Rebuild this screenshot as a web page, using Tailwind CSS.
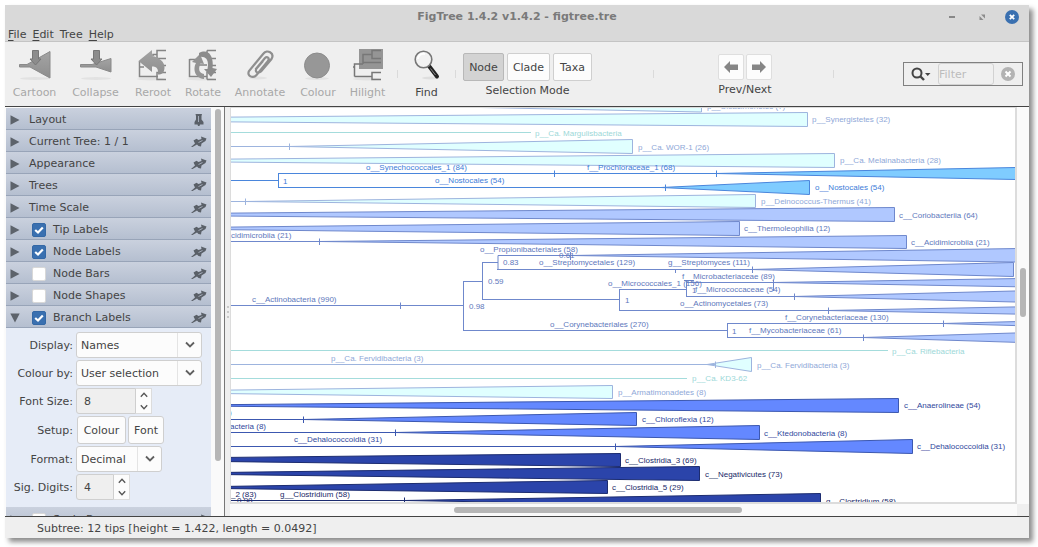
<!DOCTYPE html>
<html lang="en">
<head>
<meta charset="utf-8">
<title>FigTree 1.4.2 v1.4.2 - figtree.tre</title>
<script src="https://cdn.jsdelivr.net/npm/@tailwindcss/browser@4"></script>
</head>
<body class="h-screen overflow-hidden bg-white pt-[5px] pr-[9px] pb-[9px] pl-[5px] font-['DejaVu_Sans',sans-serif] text-[11px] leading-4 text-[#444]">

<svg width="0" height="0" class="absolute" aria-hidden="true">
  <defs>
    <linearGradient id="metal" x1="0" y1="0" x2="0" y2="1"><stop offset="0" stop-color="#a4a4a4"/><stop offset="1" stop-color="#8e8e8e"/></linearGradient>
    <symbol id="pin" viewBox="0 0 16 14"><path d="M0 12L4 8.500L2.500 5.500L5.500 3.800L7.500 5L10.500 4L10 1.500L15.500 3.500L14.500 6L10.500 8.500L10 11.500L7.500 11L6 9.500L1.500 12Z" fill="#5a6068"/><path d="M7.500 7.500L11.500 5.500" stroke="#a4acba" stroke-width="1"/></symbol>
    <symbol id="pin-up" viewBox="0 0 16 14"><path d="M4.500 1 H11 L10.500 3 V6.500 L12.500 9 V11.500 H9 L8.500 13 H7 L6.500 11.500 H3.500 V9 L5 6.500 V3 Z" fill="#5a6068"/><path d="M7.500 3V9" stroke="#a4acba" stroke-width="1"/></symbol>
    <symbol id="tri" viewBox="0 0 10 10"><path d="M.5 .3L9.500 5L.5 9.700Z" fill="#5d636b"/></symbol>
    <symbol id="check" viewBox="0 0 14 14"><path d="M3.200 7L6 9.500L10.800 4.500" fill="none" stroke="#fff" stroke-width="2.200"/></symbol>
    <symbol id="chev" viewBox="0 0 10 8"><path d="M1 1.500L5 5.500L9 1.500" fill="none" stroke="#606060" stroke-width="1.800"/></symbol>
    <symbol id="up" viewBox="0 0 8 6"><path d="M.8 4.800L4 1.300L7.200 4.800" fill="none" stroke="#555" stroke-width="1.300"/></symbol>
    <symbol id="down" viewBox="0 0 8 6"><path d="M.8 1.200L4 4.700L7.200 1.200" fill="none" stroke="#555" stroke-width="1.300"/></symbol>
  </defs>
</svg>

<div class="flex h-full flex-col bg-[#efefef] shadow-[4px_4px_5px_rgba(0,0,0,0.45)]">

  <!-- Title bar and menu -->
  <header class="shrink-0 border-b border-[#c4c4c4] bg-[#d9d9d9]">
    <div class="grid h-6 grid-cols-[1fr_auto_1fr] items-center">
      <span></span>
      <h1 class="font-bold text-[#7a7a7a]">FigTree 1.4.2 v1.4.2 - figtree.tre</h1>
      <div class="flex items-center justify-end gap-4 pr-[10px]">
        <button aria-label="Minimise" class="flex size-[14px] items-center justify-center"><svg class="size-[14px]"><rect x="4" y="6" width="6" height="2" fill="#888"/></svg></button>
        <button aria-label="Maximise" class="flex size-[14px] items-center justify-center"><svg class="size-[14px]"><path d="M6 4.500H10V8.500ZM4.500 6L8.500 10H4.500Z" fill="#8c8c8c"/></svg></button>
        <button aria-label="Close" class="size-[14px] rounded-full bg-[#3a70b0]"><svg class="size-[14px]"><path d="M4.800 4.800L9.200 9.200M9.200 4.800L4.800 9.200" stroke="#fff" stroke-width="1.800"/></svg></button>
      </div>
    </div>
    <nav class="flex h-3 items-center gap-[6px] pl-[3px]">
      <button><u class="underline-offset-2">F</u>ile</button>
      <button><u class="underline-offset-2">E</u>dit</button>
      <button>Tree</button>
      <button><u class="underline-offset-2">H</u>elp</button>
    </nav>
  </header>

  <!-- Toolbar -->
  <div class="flex h-[65px] shrink-0 items-start border-b border-[#444] pt-[7px]">
    <button disabled class="flex w-[59px] flex-col items-center gap-1 text-[#a8a8a8]">
      <svg class="size-8" viewBox="0 0 32 32"><ellipse cx="16" cy="29.500" rx="15" ry="1.500" fill="#e2e2e2"/><path d="M.5 15.500H8L31 2.500V29L11 18H.5Z" fill="url(#metal)" stroke="#8a8a8a"/><path d="M13.500 1.500H19.500V10H22L16.500 16L11 10H13.500Z" fill="#8c8c8c" stroke="#777"/></svg>
      <span>Cartoon</span>
    </button>
    <button disabled class="flex w-[63px] flex-col items-center gap-1 text-[#a8a8a8]">
      <svg class="size-8" viewBox="0 0 32 32"><ellipse cx="16" cy="29.500" rx="15" ry="1.500" fill="#e2e2e2"/><path d="M.5 15.500H12L31 9.500V23L16 18H.5Z" fill="url(#metal)" stroke="#8a8a8a"/><path d="M13.500 1.500H19.500V10H22L16.500 16L11 10H13.500Z" fill="#8c8c8c" stroke="#777"/></svg>
      <span>Collapse</span>
    </button>
    <button disabled class="flex w-[52px] flex-col items-center gap-1 text-[#a8a8a8]">
      <svg class="size-8" viewBox="0 0 32 32"><ellipse cx="14" cy="30" rx="14" ry="1.500" fill="#e2e2e2"/><path d="M2.500 12V27.500H21M2.500 18H7M16 7V5.500H20M29 1.500H20V9.500H29M29 16.500H22M29 23.500H20V30.500H29" fill="none" stroke="#858585" stroke-width="1.500"/><path d="M1.500 12L15 1V7C22 8 28 13 27.500 19C27 24 25 25.500 21 25.500C21.500 20 20 17.500 15 17.500V23Z" fill="url(#metal)"/></svg>
      <span>Reroot</span>
    </button>
    <button disabled class="flex w-[48px] flex-col items-center gap-1 text-[#a8a8a8]">
      <svg class="size-8" viewBox="0 0 32 32"><ellipse cx="14" cy="30" rx="14" ry="1.500" fill="#e2e2e2"/><path d="M2.500 10V27.500H20M2.500 10.500H9M11 16H20M20 9.500H29M20 1.500H29M21 16.500H29M21 23.500H29M20 30.500H29M20 23V30.500M20 1.500V9" fill="none" stroke="#858585" stroke-width="1.500"/><path d="M17 30C7 29 6 19 9 14L5 13L13 5L17 15L13.500 14.500C11 20 12 24 17 25Z" fill="#949494"/><path d="M12 4C22-1 27 8 25.500 19L30 20L24 28L17 20L20.500 20C22 12 20 7 12 8Z" fill="#8c8c8c"/></svg>
      <span>Rotate</span>
    </button>
    <button disabled class="flex w-[66px] flex-col items-center gap-1 text-[#a8a8a8]">
      <svg class="size-8" viewBox="0 0 32 32"><ellipse cx="14" cy="29" rx="9" ry="1.500" fill="#e2e2e2"/><path d="M11.500 20.500L21 9C23 7 26 9 24 12L12.500 26C9 30 2.500 27 5 22L19.500 4.500C23 0 31 4 27.500 10L17 22.500C14 25 10.500 23 12.500 19.500L19 12" fill="none" stroke="#8f8f8f" stroke-width="2.200"/></svg>
      <span>Annotate</span>
    </button>
    <button disabled class="flex w-[50px] flex-col items-center gap-1 text-[#a8a8a8]">
      <svg class="size-8" viewBox="0 0 32 32"><ellipse cx="15" cy="29.500" rx="12" ry="1.500" fill="#e2e2e2"/><circle cx="15" cy="16.500" r="12.500" fill="#979797" stroke="#8c8c8c"/></svg>
      <span>Colour</span>
    </button>
    <button disabled class="flex w-[49px] flex-col items-center gap-1 text-[#a8a8a8]">
      <svg class="size-8" viewBox="0 0 32 32"><ellipse cx="15" cy="30" rx="14" ry="1.500" fill="#e2e2e2"/><rect x="7" y="0" width="24" height="20" fill="#959595"/><path d="M1 18H2.500M2.500 27.500V15H11M11 13V5.500H20M29 1.500H20V9.500H29M11 5.500V15M11 13.500H29M2.500 27.500H20M29 23.500H20V30.500H29" fill="none" stroke="#777" stroke-width="1.500"/></svg>
      <span>Hilight</span>
    </button>
    <span class="mt-[21px] ml-[5px] h-2 w-px bg-[#dadada]"></span>
    <button class="flex w-[57px] flex-col items-center gap-1">
      <svg class="size-8" viewBox="0 0 32 32"><ellipse cx="20" cy="29" rx="9" ry="1.500" fill="#dedede"/><path d="M18 17L26 27.500" stroke="#222" stroke-width="4" stroke-linecap="round"/><path d="M19.500 19.500L24.500 26" stroke="#888" stroke-width="1"/><circle cx="12.500" cy="10.500" r="8.300" fill="#f2f2f2" stroke="#777" stroke-width="1.600"/><path d="M7 10C7 6 11 4 14 5" fill="none" stroke="#fff" stroke-width="2"/></svg>
      <span>Find</span>
    </button>
    <span class="mt-[21px] mr-[7px] h-2 w-px bg-[#dadada]"></span>
    <div class="mt-[4px] flex flex-col items-center gap-[2px]">
      <div class="flex gap-[3px]">
        <button aria-pressed="true" class="h-7 w-[41px] rounded-[2px] border border-[#b8b8b8] bg-[#d3d3d3] pt-px">Node</button>
        <button class="h-7 w-[43px] rounded-[2px] border border-[#cfcfcf] bg-[#fcfcfc] pt-px">Clade</button>
        <button class="h-7 w-[39px] rounded-[2px] border border-[#cfcfcf] bg-[#fcfcfc] pt-px">Taxa</button>
      </div>
      <span>Selection Mode</span>
    </div>
    <span class="mt-[21px] ml-[61px] h-2 w-px bg-[#dadada]"></span>
    <div class="mt-[5px] ml-16 flex flex-col items-center gap-[2px]">
      <div class="flex gap-[2px]">
        <button aria-label="Previous" class="flex size-[26px] items-center justify-center rounded-[2px] border border-[#dedede] bg-[#fcfcfc]"><svg class="h-3 w-4"><path d="M1 6L7 0V3.500H15V9H7V12Z" fill="#858585"/></svg></button>
        <button aria-label="Next" class="flex size-[26px] items-center justify-center rounded-[2px] border border-[#dedede] bg-[#fcfcfc]"><svg class="h-3 w-4"><path d="M15 6L9 0V3.500H1V9H9V12Z" fill="#858585"/></svg></button>
      </div>
      <span>Prev/Next</span>
    </div>
    <span class="mt-[21px] ml-[61px] h-2 w-px bg-[#dadada]"></span>
    <div class="mt-[13px] mr-[6px] ml-auto flex h-6 w-[120px] items-center border border-[#808080] pl-[7px]">
      <button aria-label="Search options"><svg class="h-4 w-5"><circle cx="6" cy="7" r="4.500" fill="none" stroke="#444" stroke-width="2"/><path d="M9 10L13 14" stroke="#444" stroke-width="2.400"/><path d="M14 7H19.500L16.700 10Z" fill="#444"/></svg></button>
      <input type="text" aria-label="Filter" placeholder="Filter" class="ml-[7px] h-[22px] w-14 rounded-[3px] border border-[#d2d2d2] bg-[#f0f0f0] placeholder-[#bcbcbc] outline-none">
      <button aria-label="Clear filter" class="ml-[7px] size-[14px] rounded-full bg-[#b3b3b3]"><svg class="size-[14px]"><path d="M4.500 4.500L9.500 9.500M9.500 4.500L4.500 9.500" stroke="#fff" stroke-width="2"/></svg></button>
    </div>
  </div>

  <!-- Side panel and tree -->
  <div class="flex min-h-0 flex-1">
    <aside class="flex w-[220px] shrink-0 border-r border-[#777] bg-[#fafafa] pt-px pl-px">
      <div class="w-[205px] shrink-0 overflow-hidden">
        <section class="flex h-[22px] items-center border-b border-[#98a4b8] bg-linear-to-b from-[#cad1de] to-[#b5bfd0] pt-[2px] pr-1 pl-1"><svg class="size-[10px]"><use href="#tri"/></svg><button class="ml-[9px]">Layout</button><svg class="ml-auto h-[14px] w-4"><use href="#pin-up"/></svg></section>
        <section class="flex h-[22px] items-center border-b border-[#98a4b8] bg-linear-to-b from-[#cad1de] to-[#b5bfd0] pt-[2px] pr-1 pl-1"><svg class="size-[10px]"><use href="#tri"/></svg><button class="ml-[9px]">Current Tree: 1 / 1</button><svg class="ml-auto h-[14px] w-4"><use href="#pin"/></svg></section>
        <section class="flex h-[22px] items-center border-b border-[#98a4b8] bg-linear-to-b from-[#cad1de] to-[#b5bfd0] pt-[2px] pr-1 pl-1"><svg class="size-[10px]"><use href="#tri"/></svg><button class="ml-[9px]">Appearance</button><svg class="ml-auto h-[14px] w-4"><use href="#pin"/></svg></section>
        <section class="flex h-[22px] items-center border-b border-[#98a4b8] bg-linear-to-b from-[#cad1de] to-[#b5bfd0] pt-[2px] pr-1 pl-1"><svg class="size-[10px]"><use href="#tri"/></svg><button class="ml-[9px]">Trees</button><svg class="ml-auto h-[14px] w-4"><use href="#pin"/></svg></section>
        <section class="flex h-[22px] items-center border-b border-[#98a4b8] bg-linear-to-b from-[#cad1de] to-[#b5bfd0] pt-[2px] pr-1 pl-1"><svg class="size-[10px]"><use href="#tri"/></svg><button class="ml-[9px]">Time Scale</button><svg class="ml-auto h-[14px] w-4"><use href="#pin"/></svg></section>
        <section class="flex h-[22px] items-center border-b border-[#98a4b8] bg-linear-to-b from-[#cad1de] to-[#b5bfd0] pt-[2px] pr-1 pl-1"><svg class="size-[10px]"><use href="#tri"/></svg><label class="relative ml-3 flex items-center gap-[7px]"><input type="checkbox" checked class="size-[14px] appearance-none rounded-[2px] border border-[#d8d8d8] bg-white checked:border-[#3468a6] checked:bg-[#3a70b0]"><svg class="pointer-events-none absolute left-0 size-[14px]"><use href="#check"/></svg>Tip Labels</label><svg class="ml-auto h-[14px] w-4"><use href="#pin"/></svg></section>
        <section class="flex h-[22px] items-center border-b border-[#98a4b8] bg-linear-to-b from-[#cad1de] to-[#b5bfd0] pt-[2px] pr-1 pl-1"><svg class="size-[10px]"><use href="#tri"/></svg><label class="relative ml-3 flex items-center gap-[7px]"><input type="checkbox" checked class="size-[14px] appearance-none rounded-[2px] border border-[#d8d8d8] bg-white checked:border-[#3468a6] checked:bg-[#3a70b0]"><svg class="pointer-events-none absolute left-0 size-[14px]"><use href="#check"/></svg>Node Labels</label><svg class="ml-auto h-[14px] w-4"><use href="#pin"/></svg></section>
        <section class="flex h-[22px] items-center border-b border-[#98a4b8] bg-linear-to-b from-[#cad1de] to-[#b5bfd0] pt-[2px] pr-1 pl-1"><svg class="size-[10px]"><use href="#tri"/></svg><label class="ml-3 flex items-center gap-[7px]"><input type="checkbox" class="size-[14px] appearance-none rounded-[2px] border border-[#d8d8d8] bg-white checked:bg-[#3a70b0]">Node Bars</label><svg class="ml-auto h-[14px] w-4"><use href="#pin"/></svg></section>
        <section class="flex h-[22px] items-center border-b border-[#98a4b8] bg-linear-to-b from-[#cad1de] to-[#b5bfd0] pt-[2px] pr-1 pl-1"><svg class="size-[10px]"><use href="#tri"/></svg><label class="ml-3 flex items-center gap-[7px]"><input type="checkbox" class="size-[14px] appearance-none rounded-[2px] border border-[#d8d8d8] bg-white checked:bg-[#3a70b0]">Node Shapes</label><svg class="ml-auto h-[14px] w-4"><use href="#pin"/></svg></section>
        <section class="flex h-[22px] items-center border-b border-[#98a4b8] bg-linear-to-b from-[#cad1de] to-[#b5bfd0] pt-[2px] pr-1 pl-1"><svg class="size-[10px] rotate-90"><use href="#tri"/></svg><label class="relative ml-3 flex items-center gap-[7px]"><input type="checkbox" checked class="size-[14px] appearance-none rounded-[2px] border border-[#d8d8d8] bg-white checked:border-[#3468a6] checked:bg-[#3a70b0]"><svg class="pointer-events-none absolute left-0 size-[14px]"><use href="#check"/></svg>Branch Labels</label><svg class="ml-auto h-[14px] w-4"><use href="#pin"/></svg></section>

        <form class="grid h-[179px] grid-cols-[67px_1fr] content-start items-center gap-x-[3px] gap-y-[2px] bg-[#e6ecf7] pt-1">
          <label for="display" class="pt-[2px] text-right whitespace-nowrap">Display:</label>
          <div class="relative h-[26px] w-[126px]">
            <select id="display" class="h-full w-full appearance-none rounded-[3px] border border-[#cfcfcf] bg-[#fcfcfc] pt-px pl-1"><option>Names</option></select>
            <span class="pointer-events-none absolute inset-y-px right-px flex w-6 items-center justify-center border-l border-[#e4e4e4]"><svg class="h-2 w-[10px]"><use href="#chev"/></svg></span>
          </div>
          <label for="colourby" class="pt-[2px] text-right whitespace-nowrap">Colour by:</label>
          <div class="relative h-[26px] w-[126px]">
            <select id="colourby" class="h-full w-full appearance-none rounded-[3px] border border-[#cfcfcf] bg-[#fcfcfc] pt-px pl-1"><option>User selection</option></select>
            <span class="pointer-events-none absolute inset-y-px right-px flex w-6 items-center justify-center border-l border-[#e4e4e4]"><svg class="h-2 w-[10px]"><use href="#chev"/></svg></span>
          </div>
          <label for="fontsize" class="pt-[2px] text-right whitespace-nowrap">Font Size:</label>
          <div class="flex h-[26px]">
            <input id="fontsize" type="text" value="8" class="w-[60px] rounded-l-[3px] border border-[#cfcfcf] bg-[#efefef] pt-px pl-[7px]">
            <div class="flex w-4 flex-col justify-around border border-l-0 border-[#dcdcdc] bg-[#fcfcfc]">
              <button type="button" aria-label="Increase font size" class="flex justify-center"><svg class="h-[6px] w-2"><use href="#up"/></svg></button>
              <button type="button" aria-label="Decrease font size" class="flex justify-center"><svg class="h-[6px] w-2"><use href="#down"/></svg></button>
            </div>
          </div>
          <span class="pt-[2px] text-right">Setup:</span>
          <div class="flex h-7 gap-[2px] pl-px">
            <button type="button" class="w-[49px] rounded-[3px] border border-[#cfcfcf] bg-[#fcfcfc] pt-px">Colour</button>
            <button type="button" class="w-9 rounded-[3px] border border-[#cfcfcf] bg-[#fcfcfc] pt-px">Font</button>
          </div>
          <label for="format" class="pt-[2px] text-right whitespace-nowrap">Format:</label>
          <div class="relative h-[26px] w-[86px]">
            <select id="format" class="h-full w-full appearance-none rounded-[3px] border border-[#cfcfcf] bg-[#fcfcfc] pt-px pl-1"><option>Decimal</option></select>
            <span class="pointer-events-none absolute inset-y-px right-px flex w-6 items-center justify-center border-l border-[#e4e4e4]"><svg class="h-2 w-[10px]"><use href="#chev"/></svg></span>
          </div>
          <label for="digits" class="pt-[2px] text-right whitespace-nowrap">Sig. Digits:</label>
          <div class="flex h-[26px]">
            <input id="digits" type="text" value="4" class="w-[38px] rounded-l-[3px] border border-[#cfcfcf] bg-[#efefef] pt-px pl-[7px]">
            <div class="flex w-4 flex-col justify-around border border-l-0 border-[#dcdcdc] bg-[#fcfcfc]">
              <button type="button" aria-label="Increase digits" class="flex justify-center"><svg class="h-[6px] w-2"><use href="#up"/></svg></button>
              <button type="button" aria-label="Decrease digits" class="flex justify-center"><svg class="h-[6px] w-2"><use href="#down"/></svg></button>
            </div>
          </div>
        </form>
        <section class="flex h-[22px] items-center border-b border-[#98a4b8] bg-linear-to-b from-[#cad1de] to-[#b5bfd0] pt-1 pr-1 pl-1"><svg class="size-[10px]"><use href="#tri"/></svg><label class="ml-3 flex items-center gap-[7px]"><input type="checkbox" class="size-[14px] appearance-none rounded-[2px] border border-[#d8d8d8] bg-white checked:bg-[#3a70b0]">Scale Bar</label><svg class="ml-auto h-[14px] w-4"><use href="#pin"/></svg></section>
      </div>
      <div class="flex flex-1 justify-center pt-px"><div class="h-[352px] w-[6px] rounded-full bg-[#b6b6b6]"></div></div>
    </aside>

    <div class="flex w-[5px] shrink-0 flex-col items-center justify-center gap-[3px]">
      <span class="size-[2px] bg-[#c8c8c8]"></span><span class="size-[2px] bg-[#c8c8c8]"></span><span class="size-[2px] bg-[#c8c8c8]"></span>
    </div>

    <main class="grid min-w-0 flex-1 grid-cols-[1fr_12px] grid-rows-[1fr_12px]">
      <div class="overflow-hidden border-2 border-t border-l border-[#dcdcdc] bg-white">
        <svg width="1200" height="395" viewBox="231 108 1200 395" class="max-w-none font-['Liberation_Sans',Arial,sans-serif] text-[8px]" role="img" aria-label="Phylogenetic tree">
          <!-- light cyan phyla -->
          <g fill="#e0ffff" stroke="#9db4de">
            <path d="M358 105L701.500 98V112Z"/>
            <path d="M220 117.200L807.500 112.500V126.500L220 121.800Z"/>
            <path d="M220 146.500H289M289.500 143.500V150M289 146.500L632.500 139.500V153.500Z"/>
            <path d="M220 159.200L834.500 153.500V167.500L220 162Z"/>
            <path d="M220 201.500H245M245.500 198.500V205M245 201.500L755.500 194.500V207.500Z"/>
            <path d="M220 364.500H716M715.500 361.500V368M707 364.500L751.500 357.500V371.500Z"/>
            <path d="M220 390.200L612.500 385.500V398.500L220 393.500Z"/>
          </g>
          <path d="M220 132.500H531M220 350.500H888M220 378.500H687" stroke="#a4dcdc"/>
          <!-- Cyanobacteria -->
          <g fill="none" stroke="#4a86dc">
            <path d="M220 180.500H278.500M278.500 173.500V187.500M278 173.500H716M278 187.500H665M554.500 170.500V177M665.500 184.500V191M716.500 170.500V177"/>
            <path fill="#7fccff" d="M716 173.500L1116 165.500V181.500ZM661 187.500L809.500 180.500V194.500Z"/>
          </g>
          <!-- Actinobacteria -->
          <g fill="#b0c8ff" stroke="#6f88cc">
            <path d="M220 213.200L894.500 207.500V221.500L220 216Z"/>
            <path d="M220 227.200L739.500 221.500V235.500L220 229.600Z"/>
            <path d="M220 241.500H319M319.500 238.500V245M319 241.500L906.500 235.500V248.500Z"/>
            <path d="M571 255.500L1115 247V263.500Z"/>
            <path d="M752 269.500L1013.500 262.500V276.500Z"/>
            <path d="M773 282.500L1115 277V288.500Z"/>
            <path d="M794 296.500L1115 288.500V304.500Z"/>
            <path d="M828 310.500L1115 305V316Z"/>
            <path d="M943 323.500L1115 319V328.500Z"/>
            <path d="M863 337.500L1115 330V345.500Z"/>
            <path fill="none" d="M220 305.500H463.500M463.500 281.500V330.500M463 281.500H482.500M482.500 262.500V299.500M482 262.500H498M498 255.500V269.500M498 255.500H571M570.500 252V260M497 269.500H752M675.500 269V273M752.500 266.500V273M482 299.500H619M619.500 289.500V310.500M619 289.500H686.500M686.500 280.500V296.500M684 280.500H694M686 282.500H773M773.500 279.500V291M686 296.500H794M794.500 293.500V300M619 310.500H828M828.500 307.500V314M463 330.500H727M727.500 323.500V337.500M727 323.500H943M943.500 320.500V327M727 337.500H863M863.500 334.500V341M400.500 302.500V309"/>
          </g>
          <!-- Chloroflexi -->
          <g fill="#6488ff" stroke="#3c58b0">
            <path d="M220 404.700L898.500 398.500V412.500L220 406.200Z"/>
            <path d="M220 419.500H303M303.500 416.500V423M303 419.500L636.500 412.500V425.500Z"/>
            <path d="M220 432.500H395M395.500 429.500V436M395 432.500L759.500 425.500V439.500Z"/>
            <path d="M220 446.500H615M615.500 443.500V450M615 446.500L912.500 439.500V453.500Z"/>
          </g>
          <!-- Firmicutes -->
          <g fill="#2b44aa" stroke="#1c2c70">
            <path d="M220 457.500L620.500 453.500V466.500L220 461.500Z"/>
            <path d="M220 472.500L699.500 466.500V480.500L220 474.500Z"/>
            <path d="M220 486.500L607.500 480.500V493.500L220 488.500Z"/>
            <path d="M220 500.500H404M404.500 497.500V504M404 500.500L820.500 493.500V507.500Z"/>
          </g>

          <g fill="#8fa8d8">
            <text x="707" y="109">p__Cloacimonetes (7)</text>
            <text x="812" y="122">p__Synergistetes (32)</text>
            <text x="638" y="150">p__Ca. WOR-1 (26)</text>
            <text x="840" y="163">p__Ca. Melainabacteria (28)</text>
            <text x="761" y="204">p__Deinococcus-Thermus (41)</text>
            <text x="331" y="361">p__Ca. Fervidibacteria (3)</text>
            <text x="757" y="368">p__Ca. Fervidibacteria (3)</text>
            <text x="618" y="395">p__Armatimonadetes (8)</text>
          </g>
          <g fill="#9cd8d8">
            <text x="535" y="136">p__Ca. Margulisbacteria</text>
            <text x="892" y="354">p__Ca. Riflebacteria</text>
            <text x="692" y="381">p__Ca. KD3-62</text>
          </g>
          <g fill="#3c7cd8">
            <text x="366" y="170">o__Synechococcales_1 (84)</text>
            <text x="587" y="170">f__Prochloraceae_1 (68)</text>
            <text x="283" y="184">1</text>
            <text x="435" y="183">o__Nostocales (54)</text>
            <text x="815" y="190">o__Nostocales (54)</text>
          </g>
          <g fill="#6078bc">
            <text x="899" y="218">c__Coriobacteriia (64)</text>
            <text x="744" y="231">c__Thermoleophilia (12)</text>
            <text x="231" y="238">cidimicrobiia (21)</text>
            <text x="911" y="245">c__Acidimicrobiia (21)</text>
            <text x="480" y="252">o__Propionibacteriales (58)</text>
            <text x="559" y="258">0.61</text>
            <text x="503" y="265">0.83</text>
            <text x="539" y="265">o__Streptomycetales (129)</text>
            <text x="668" y="265">g__Streptomyces (111)</text>
            <text x="682" y="279">f__Microbacteriaceae (89)</text>
            <text x="488" y="284">0.59</text>
            <text x="608" y="286">o__Micrococcales_1 (156)</text>
            <text x="692" y="293">1</text>
            <text x="695" y="292">f__Micrococcaceae (54)</text>
            <text x="625" y="303">1</text>
            <text x="680" y="306">o__Actinomycetales (73)</text>
            <text x="252" y="302">c__Actinobacteria (990)</text>
            <text x="469" y="309">0.98</text>
            <text x="785" y="320">f__Corynebacteriaceae (130)</text>
            <text x="550" y="327">o__Corynebacteriales (270)</text>
            <text x="732" y="334">1</text>
            <text x="749" y="333">f__Mycobacteriaceae (61)</text>
          </g>
          <g fill="#30489c">
            <text x="904" y="408">c__Anaerolineae (54)</text>
            <text x="229" y="415">)</text>
            <text x="642" y="422">c__Chloroflexia (12)</text>
            <text x="230" y="429">acteria (8)</text>
            <text x="764" y="436">c__Ktedonobacteria (8)</text>
            <text x="294" y="442">c__Dehalococcoidia (31)</text>
            <text x="917" y="449">c__Dehalococcoidia (31)</text>
          </g>
          <g fill="#182868">
            <text x="625" y="463">c__Clostridia_3 (69)</text>
            <text x="705" y="477">c__Negativicutes (73)</text>
            <text x="612" y="490">c__Clostridia_5 (29)</text>
            <text x="231" y="497">_2 (83)</text>
            <text x="280" y="497">g__Clostridium (58)</text>
            <text x="237" y="503">0.98</text>
            <text x="826" y="504">g__Clostridium (58)</text>
          </g>
        </svg>
      </div>
      <div class="flex justify-center bg-[#fafafa] pt-[161px]"><div class="h-[49px] w-[6px] rounded-full bg-[#b6b6b6]"></div></div>
      <div class="flex items-center bg-[#fafafa] pl-[224px]"><div class="h-[6px] w-[288px] rounded-full bg-[#b6b6b6]"></div></div>
      <div></div>
    </main>
  </div>

  <footer class="flex h-[22px] shrink-0 items-center border-t border-[#444] pt-[2px] pl-8">Subtree: 12 tips [height = 1.422, length = 0.0492]</footer>
</div>
</body>
</html>
